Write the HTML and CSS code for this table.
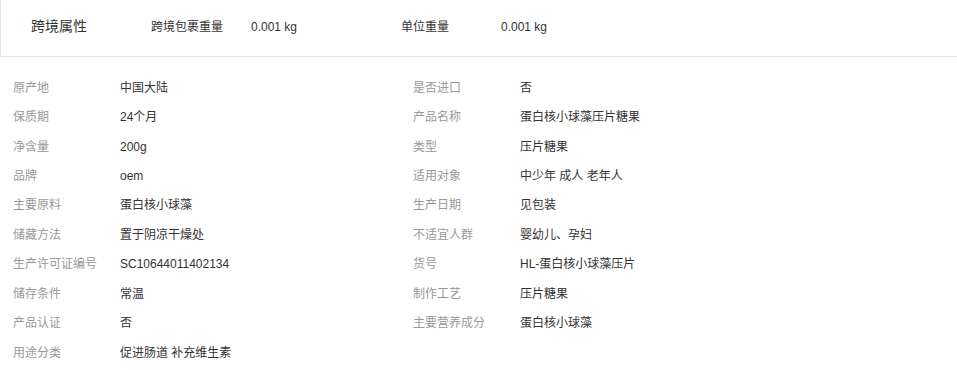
FILE: index.html
```html
<!DOCTYPE html>
<html lang="zh-CN">
<head>
<meta charset="utf-8">
<title>商品属性</title>
<link rel="stylesheet" href="styles.css">
</head>
<body>
<div class="cross">
  <div class="cross-title">跨境属性</div>
  <div class="cross-item"><span class="cross-label">跨境包裹重量</span><span class="cross-value">0.001 kg</span></div>
  <div class="cross-item"><span class="cross-label">单位重量</span><span class="cross-value">0.001 kg</span></div>
</div>
<div class="attrs">
  <div class="attr"><span class="attr-label">原产地</span><span class="attr-value">中国大陆</span></div>
  <div class="attr"><span class="attr-label">是否进口</span><span class="attr-value">否</span></div>
  <div class="attr"><span class="attr-label">保质期</span><span class="attr-value">24个月</span></div>
  <div class="attr"><span class="attr-label">产品名称</span><span class="attr-value">蛋白核小球藻压片糖果</span></div>
  <div class="attr"><span class="attr-label">净含量</span><span class="attr-value">200g</span></div>
  <div class="attr"><span class="attr-label">类型</span><span class="attr-value">压片糖果</span></div>
  <div class="attr"><span class="attr-label">品牌</span><span class="attr-value">oem</span></div>
  <div class="attr"><span class="attr-label">适用对象</span><span class="attr-value">中少年 成人 老年人</span></div>
  <div class="attr"><span class="attr-label">主要原料</span><span class="attr-value">蛋白核小球藻</span></div>
  <div class="attr"><span class="attr-label">生产日期</span><span class="attr-value">见包装</span></div>
  <div class="attr"><span class="attr-label">储藏方法</span><span class="attr-value">置于阴凉干燥处</span></div>
  <div class="attr"><span class="attr-label">不适宜人群</span><span class="attr-value">婴幼儿、孕妇</span></div>
  <div class="attr"><span class="attr-label">生产许可证编号</span><span class="attr-value">SC10644011402134</span></div>
  <div class="attr"><span class="attr-label">货号</span><span class="attr-value">HL-蛋白核小球藻压片</span></div>
  <div class="attr"><span class="attr-label">储存条件</span><span class="attr-value">常温</span></div>
  <div class="attr"><span class="attr-label">制作工艺</span><span class="attr-value">压片糖果</span></div>
  <div class="attr"><span class="attr-label">产品认证</span><span class="attr-value">否</span></div>
  <div class="attr"><span class="attr-label">主要营养成分</span><span class="attr-value">蛋白核小球藻</span></div>
  <div class="attr"><span class="attr-label">用途分类</span><span class="attr-value">促进肠道 补充维生素</span></div>
</div>
</body>
</html>
```
FILE: styles.css
```css
html, body {
  margin: 0;
  padding: 0;
  background: #fff;
}
body {
  font-family: "Liberation Sans", "Noto Sans CJK SC", sans-serif;
  font-size: 12px;
  color: #333;
}
.cross {
  display: flex;
  align-items: center;
  height: 52px;
  padding: 0 0 4px 30px;
  border-left: 1px solid #e5e5e5;
  border-bottom: 1px solid #e5e5e5;
  line-height: 20px;
}
.cross-title {
  width: 120px;
  font-size: 14px;
  line-height: 20px;
  padding-bottom: 1px;
  color: #333;
}
.cross-item {
  display: flex;
  align-items: center;
  width: 250px;
  line-height: 20px;
  padding-top: 2px;
}
.cross-label {
  width: 100px;
  color: #333;
}
.cross-value {
  color: #333;
}
.attrs {
  display: grid;
  grid-template-columns: 400px 400px;
  padding-top: 16px;
}
.attr {
  display: flex;
  height: 29.45px;
  align-items: center;
  padding-left: 13px;
  line-height: 18px;
}
.attr-label {
  width: 107px;
  flex: none;
  color: #999;
}
.attr-value {
  color: #333;
}
```
